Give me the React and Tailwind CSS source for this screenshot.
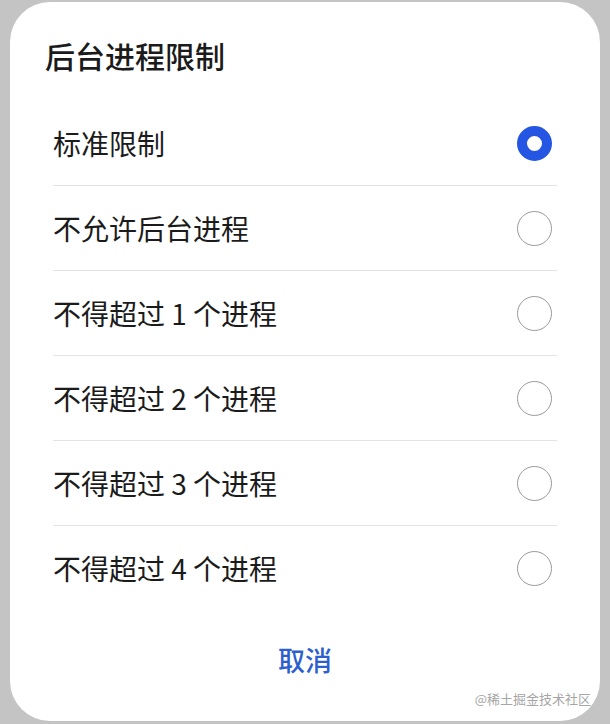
const options = [
  "标准限制",
  "不允许后台进程",
  "不得超过 1 个进程",
  "不得超过 2 个进程",
  "不得超过 3 个进程",
  "不得超过 4 个进程",
];

function Radio({ checked }) {
  if (checked) {
    return <span className="block w-[35px] h-[35px] rounded-full border-[10px] border-[#2456e3] bg-white" />;
  }
  return <span className="block w-[35px] h-[35px] rounded-full border-[1.5px] border-[#9a9a9a] bg-white" />;
}

export default function App() {
  return (
    <div
      className="w-[610px] h-[724px] overflow-hidden bg-[#c4c4c4] pt-[2px] px-[10px]"
      style={{ fontFamily: '"Noto Sans CJK SC", "Noto Sans", sans-serif' }}
    >
      <div className="relative w-[590px] h-[719px] rounded-[40px] bg-white">
        <h2 className="pt-[33px] pl-[35px] text-[30px] leading-[40px] font-medium text-[#1b1b1b]">
          后台进程限制
        </h2>

        <ul className="mt-[26px] mx-[43px]">
          {options.map((label, i) => (
            <li
              key={label}
              className={
                i < options.length - 1
                  ? "flex items-center justify-between h-[85px] pr-[5px] border-b border-[#e3e3e3]"
                  : "flex items-center justify-between h-[84px] pr-[5px]"
              }
            >
              <span className="text-[28px] leading-[36px] text-[#1b1b1b]">{label}</span>
              <Radio checked={i === 0} />
            </li>
          ))}
        </ul>

        <div className="mt-[30px] text-center text-[27px] leading-[40px] font-medium text-[#2e5fcf]">
          取消
        </div>

        <div className="absolute right-[9px] bottom-[13px] text-[13px] leading-[18px] text-[#a6a6a6]">
          @稀土掘金技术社区
        </div>
      </div>
      <div className="-mt-[1px] pl-[240px] text-[26px] leading-[36px] text-[#1b1b1b]">
        精确到秒设置
      </div>
    </div>
  );
}
